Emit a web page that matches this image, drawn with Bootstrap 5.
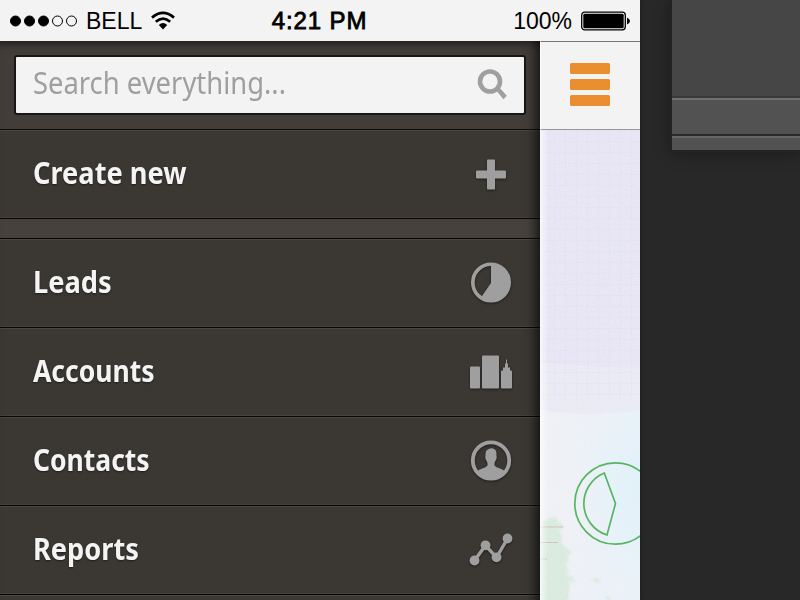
<!DOCTYPE html>
<html lang="en">
<head>
<meta charset="utf-8">
<meta name="viewport" content="width=device-width, initial-scale=1">
<title>Menu</title>
<link href="https://cdn.jsdelivr.net/npm/bootstrap@5.3.0/dist/css/bootstrap.min.css" rel="stylesheet">
<style>
body{background:#282828;font-family:"Noto Sans","Open Sans",sans-serif}
.stage{width:800px;height:600px}
.phone{width:640px;height:600px;box-shadow:0 0 6px rgba(0,0,0,.35);z-index:1}
.status{height:41px;background:#f3f3f3;color:#000;font:23px/41px "Liberation Sans",Arial,sans-serif}
.status span{padding-top:1px}
.status .side{flex:1 1 0}
.signal{margin-left:10px}
.carrier{margin-left:8px}
.wifi{margin-left:9px}
.clock{font-size:24px;letter-spacing:.9px;-webkit-text-stroke:.8px #000;margin-right:1px}
.status .clock{padding-top:0}
.battery{margin:0 10px 0 9px}
.drawer{width:540px;background:#3b3833;overflow:hidden}
.shade{position:absolute;inset:0;pointer-events:none;box-shadow:inset -14px 0 12px -10px rgba(0,0,0,.7),inset 0 10px 10px -8px rgba(0,0,0,.6)}
.search-area{height:89px;padding:14px 14px;background:#423d38;border-bottom:1px solid #0c0b09}
.search-box{width:512px;height:60px;background:#f3f3f3;border:2px solid #171717;border-radius:3px;padding:0 17px 4px 17px}
.squeeze{display:inline-block;transform-origin:0 50%;white-space:nowrap}
.prompt{font-size:30px;line-height:52px;color:#9f9f9f;transform:scaleX(.913)}
.mag{margin-top:1px}
.entry{height:89px;padding:0 23px 0 33px;background:#3b3833;color:#f4f4f4!important;border-bottom:1px solid #080706;box-shadow:inset 0 1px #4a4741,inset 0 -1px #444139}
.entry .squeeze{font-size:31px;line-height:42px;font-weight:700;margin-top:-4px;text-shadow:0 1px 2px rgba(0,0,0,.5);transform:scaleX(.855)}
.entry .squeeze.wide{transform:scaleX(.878)}
.entry svg,.mag{display:block;fill:#9f9f9f}
.entry svg{width:50px;height:50px;margin-top:-1px;filter:drop-shadow(0 1px 1px rgba(0,0,0,.5))}
.divide{height:20px;background:#46423b;border-bottom:1px solid #080706}
.peek{width:100px}
.peek-head{height:89px;background:#f3f3f3;border-top:1px solid #777;border-bottom:1px solid #999;border-left:1px solid #fff;padding-right:1px}
.bars{width:40px;gap:5px;margin-top:-2px}
.bars span{height:11px;background:#ea8e30;border-radius:1.5px}
.backdrop{padding-left:31px}
.device{height:152px;background:#464646;border-left:2px solid #232323;border-bottom:2px solid #242424;width:132px;margin-left:-1px;box-shadow:0 2px 15px rgba(0,0,0,.3)}
.ledge{height:36px;background:#525252;border-top:2px solid #707070;box-shadow:0 -2px #383838}
.foot{height:16px;background:#525252;border-top:2px solid #2a2a2a;box-shadow:inset 0 2px #676767}
</style>
<script src="https://cdn.jsdelivr.net/npm/bootstrap@5.3.0/dist/js/bootstrap.bundle.min.js"></script>
</head>
<body class="overflow-hidden">
<div class="stage d-flex overflow-hidden">
<main class="phone d-flex flex-column flex-shrink-0 position-relative">
  <header class="status d-flex align-items-center flex-shrink-0">
    <div class="side d-flex align-items-center">
      <svg class="signal" width="68" height="14"><g stroke="#000"><circle cx="5.5" cy="7" r="5"/><circle cx="19.5" cy="7" r="5"/><circle cx="33.5" cy="7" r="5"/><g fill="none"><circle cx="47.5" cy="7" r="5"/><circle cx="61.5" cy="7" r="5"/></g></g></svg>
      <span class="carrier">BELL</span>
      <svg class="wifi" width="24" height="20" viewBox="0 0 24 20"><g fill="none" stroke="#000" stroke-width="2.7"><path d="M1 6.6Q12-2.7 23 6.6M4.8 10.8Q12 4.3 19.2 10.8"/></g><path d="M7.8 14Q12 10 16.2 14L12 18.5z"/></svg>
    </div>
    <span class="clock">4:21 PM</span>
    <div class="side d-flex align-items-center justify-content-end">
      <span>100%</span>
      <svg class="battery" width="49" height="20"><rect x=".7" y="1.2" width="43.6" height="17.6" rx="3" fill="none" stroke="#000" stroke-width="1.3"/><rect x="2.3" y="2.8" width="40.4" height="14.4" rx="1.5"/><path d="M46 6.5Q49 8 49 10t-3 3.5z"/></svg>
    </div>
  </header>
  <div class="d-flex flex-grow-1">
    <nav class="drawer position-relative flex-shrink-0">
      <div class="search-area">
        <div class="search-box d-flex justify-content-between align-items-center">
          <span class="squeeze prompt">Search everything...</span>
          <svg class="mag flex-shrink-0" width="30" height="32" viewBox="0 0 30 32"><circle cx="13" cy="13.5" r="10" fill="none" stroke="#9f9f9f" stroke-width="4.6"/><path d="M18.5 21.5l3-3L29.8 27.8l-3.4 3.4z"/></svg>
        </div>
      </div>
      <div>
        <a class="entry d-flex align-items-center justify-content-between text-decoration-none" href="#"><span class="squeeze wide">Create new</span><svg viewBox="0 0 50 50"><path d="M21 10.5h6q1 0 1 1v10h10q1 0 1 1v6q0 1-1 1H28v10q0 1-1 1h-6q-1 0-1-1v-10H10q-1 0-1-1v-6q0-1 1-1h10v-10q0-1 1-1z"/></svg></a>
        <div class="divide"></div>
        <a class="entry d-flex align-items-center justify-content-between text-decoration-none" href="#"><span class="squeeze wide">Leads</span><svg viewBox="0 0 50 50"><circle cx="24" cy="24.5" r="18.2" fill="none" stroke="#9f9f9f" stroke-width="3.6"/><path d="M24 5.5a19 19 0 1 1-10.5 34.8L24 25z"/></svg></a>
        <a class="entry d-flex align-items-center justify-content-between text-decoration-none" href="#"><span class="squeeze">Accounts</span><svg viewBox="0 0 50 50"><rect x="3" y="19.5" width="10" height="22" rx="1"/><rect x="15" y="8.5" width="17" height="33" rx="1"/><path d="M34 24.5q0-1 1-1h1v-3h2v-4h1v-4h1v4h1v4h2v3h1q1 0 1 1v16q0 1-1 1h-9q-1 0-1-1z"/></svg></a>
        <a class="entry d-flex align-items-center justify-content-between text-decoration-none" href="#"><span class="squeeze">Contacts</span><svg viewBox="0 0 50 50"><circle cx="24" cy="24.5" r="18.2" fill="none" stroke="#9f9f9f" stroke-width="3.8"/><path d="M20 14q4-2.8 7.5-.8 2.3 1.3 1.9 5.3l.3 3q-.2 2.2-1.4 3.4l-.8 2.4v2.2q1.500 1.800 5.500 3 4.200 1.300 4.500 3.200A18.500 18.500 0 0 1 10.500 35.700q.6-1.900 4.800-3.200 3.800-1.200 5.200-3v-2.200l-.8-2.400q-1.300-1.200-1.400-3.400l.2-3q-.2-3.300 1.500-4.500z"/></svg></a>
        <a class="entry d-flex align-items-center justify-content-between text-decoration-none" href="#"><span class="squeeze wide">Reports</span><svg viewBox="0 0 50 50"><path d="M7.5 35.5L18.5 20.5L29.5 32.5L40.5 13.5" fill="none" stroke="#9f9f9f" stroke-width="3.4"/><circle cx="7.5" cy="35.5" r="4.9"/><circle cx="18.5" cy="20.3" r="4.9"/><circle cx="29.5" cy="32.3" r="4.9"/><circle cx="40.5" cy="13.5" r="4.9"/></svg></a>
        <div class="entry"></div>
      </div>
      <div class="shade"></div>
    </nav>
    <section class="peek flex-shrink-0">
      <div class="peek-head d-flex align-items-center justify-content-center"><div class="bars d-flex flex-column"><span></span><span></span><span></span></div></div>
      <svg class="d-block" width="100" height="470" viewBox="0 130 100 470">
        <defs>
          <linearGradient id="sky" x1="0" y1="0" x2="0" y2="1"><stop offset="0" stop-color="#e6e4f4"/><stop offset="1" stop-color="#e7e5f4"/></linearGradient>
          <linearGradient id="haze" x1="0" y1="0" x2="1" y2="0"><stop offset="0" stop-color="#efeff4"/><stop offset="1" stop-color="#e8f1f8"/></linearGradient>
          <radialGradient id="aqua"><stop offset="0" stop-color="#dff0f9"/><stop offset="1" stop-color="#dff0f9" stop-opacity="0"/></radialGradient>
          <linearGradient id="edge"><stop offset="0" stop-color="#fff" stop-opacity=".7"/><stop offset="1" stop-color="#fff" stop-opacity="0"/></linearGradient>
          <pattern id="grid" width="11" height="11" x="3" y="130" patternUnits="userSpaceOnUse"><path d="M0 .5H11M.5 0V11" stroke="#d3d8e8" stroke-opacity=".2"/></pattern>
          <filter id="grain" x="0" y="0" width="1" height="1"><feTurbulence type="fractalNoise" baseFrequency=".7" numOctaves="2"/><feColorMatrix values="0 0 0 0 1 0 0 0 0 1 0 0 0 0 1 1.2 0 0 0 -.4"/></filter>
          <filter id="rough" x="-.2" y="-.2" width="1.4" height="1.4"><feTurbulence type="fractalNoise" baseFrequency=".1" numOctaves="3"/><feDisplacementMap in="SourceGraphic" scale="13" xChannelSelector="R" yChannelSelector="G"/><feGaussianBlur stdDeviation=".8"/></filter>
        </defs>
        <rect y="130" width="100" height="470" fill="url(#sky)"/>
        <path d="M0 363l100 6v42q-50 8-100-1z" fill="#e9e9f4"/>
        <path d="M0 410q50 8 100 0v190H0z" fill="url(#haze)"/>
        <ellipse cx="104" cy="490" rx="68" ry="100" fill="url(#aqua)"/>
        <rect y="130" width="100" height="270" fill="url(#grid)"/>
        <g fill="#d8e9dd" filter="url(#rough)"><path d="M4 518l14 1 3 20 9 13-4 14 5 15-5 22H0v-82z"/><path d="M50 583l6-6 7 7zM65 591l7 6v4h-7z"/></g>
        <path d="M0 527h23M0 542.5h18M0 559h7" stroke="#c9aaa2" stroke-opacity=".65"/>
        <rect y="130" width="100" height="470" filter="url(#grain)" opacity=".35"/>
        <rect y="130" width="8" height="470" fill="url(#edge)"/>
        <g fill="none" stroke="#57b462" stroke-width="1.7"><circle cx="75.5" cy="503.5" r="40.7"/><path d="M64.3 473L75.5 503.5L67 535A33 33 0 0 1 64.3 473z"/></g>
      </svg>
    </section>
  </div>
</main>
<aside class="backdrop flex-shrink-0"><div class="device d-flex flex-column justify-content-end"><div class="ledge"></div><div class="foot"></div></div></aside>
</div>
</body>
</html>
